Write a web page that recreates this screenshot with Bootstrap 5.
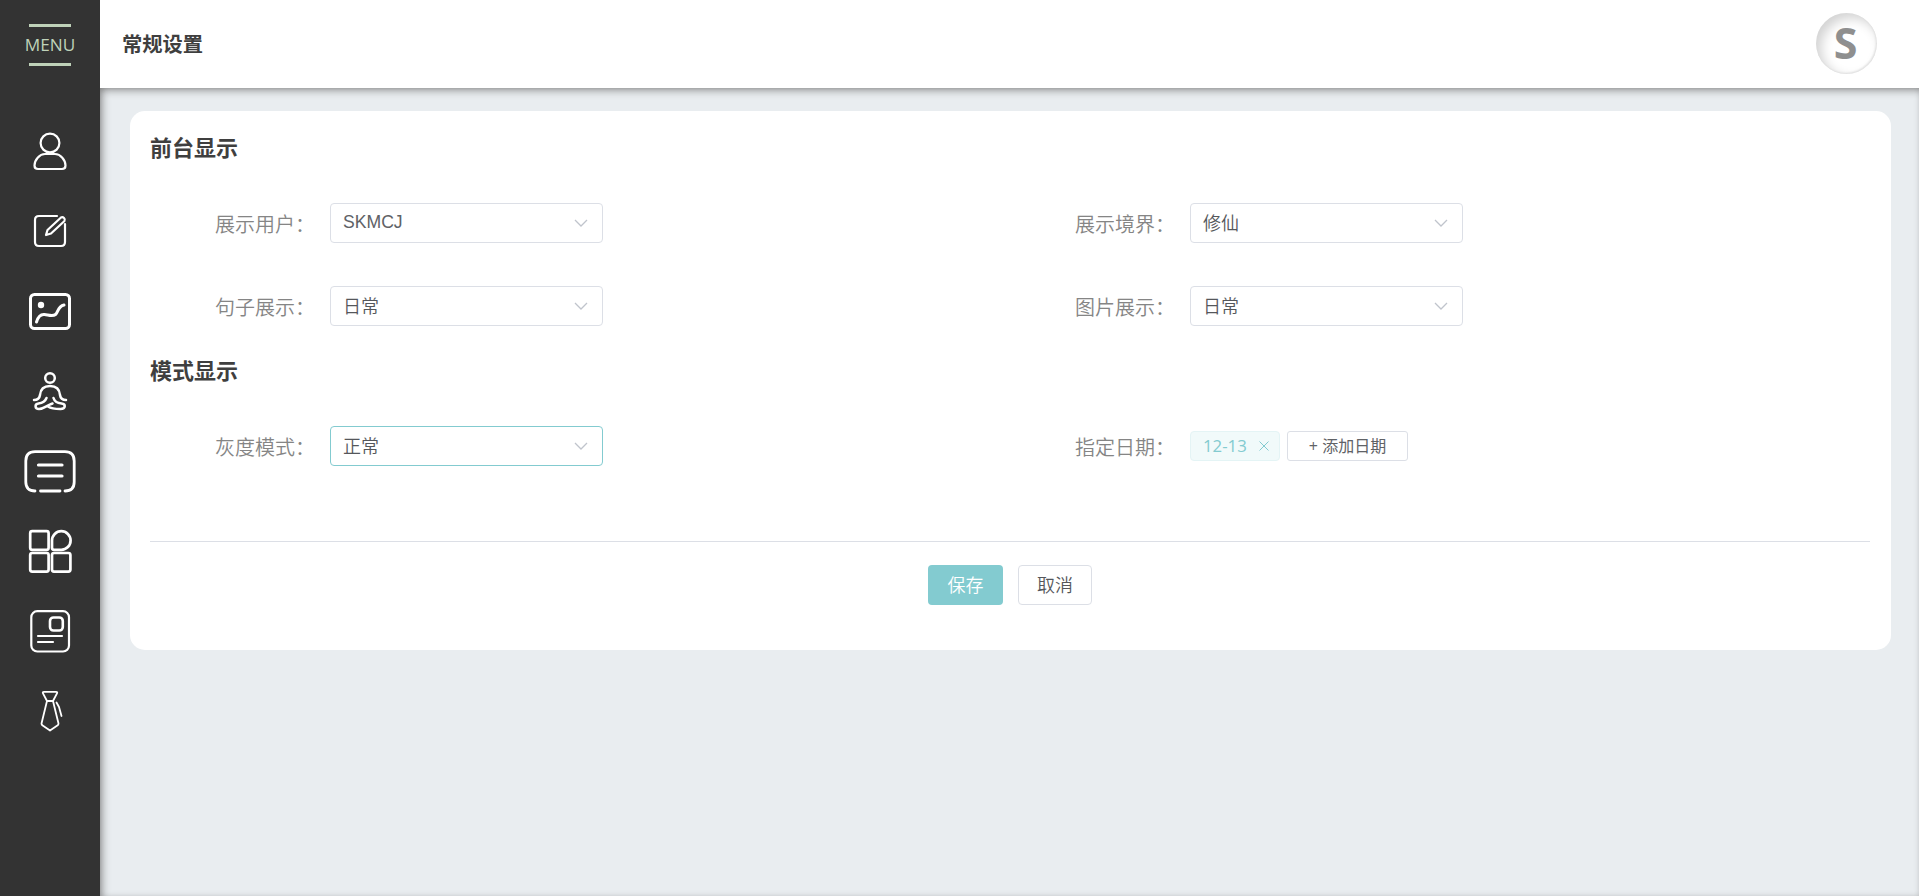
<!DOCTYPE html>
<html lang="zh-CN">

<head>
    <meta charset="UTF-8">
    <meta name="viewport" content="width=device-width, initial-scale=1.0">
    <title>常规设置</title>
    <link href="https://cdn.jsdelivr.net/npm/bootstrap@5.3.0/dist/css/bootstrap.min.css" rel="stylesheet">
    <style>
        body {
            font-family: "Open Sans", "Noto Sans CJK SC", sans-serif;
            color: #3f3f3f;
            overflow: hidden;
        }

        .side-menu {
            width: 100px;
            background: #333;
        }

        .menu-title {
            width: 60px;
            height: 42px;
            margin-top: 24px;
            margin-bottom: 45px;
            color: #bfd2b9;
            font-size: 17.2px;
            line-height: 36px;
        }

        .menu-title::before,
        .menu-title::after {
            content: "";
            display: block;
            width: 42px;
            height: 3px;
            margin: 0 auto;
            background: #bfd2b9;
        }

        .menu-item {
            height: 80px;
        }

        .menu-item svg {
            width: 60px;
            height: 60px;
            fill: none;
            stroke: #fff;
            stroke-width: 2.2;
            stroke-linecap: round;
            stroke-linejoin: round;
        }

        .top-bar {
            height: 88px;
            padding: 2px 42px 2px 22px;
        }

        .top-bar h1 {
            padding-top: 1px;
            font-size: 20.3px;
            font-weight: 700;
        }

        .avatar {
            width: 61px;
            height: 61px;
            margin-top: -2px;
            padding-right: 2px;
            color: #8f8f8f;
            font-size: 43px;
            font-weight: 700;
            box-shadow: inset 5px 5px 12px #d2d2d2, inset -1px -1px 2px #e2e2e2;
        }

        .page-main {
            padding: 23px 28px 0 30px;
            background: #e9edf0;
            box-shadow: inset 3px 3px 10px -2px #777, inset 0 0 5px rgba(0, 0, 0, .04);
        }

        .panel {
            height: 539px;
            padding: 21px 21px 0 20px;
            border-radius: 15px;
        }

        .panel h2 {
            height: 30px;
            margin: 0;
            font-size: 22px;
            font-weight: 700;
            line-height: 30px;
        }

        .field-grid {
            row-gap: 43px;
            padding-top: 41px;
            padding-bottom: 29px;
        }

        .field {
            height: 40px;
        }

        .field-label {
            width: 180px;
            padding: 3px 15px 0 0;
            color: #858585;
            font-size: 20px;
            font-weight: 350;
            text-align: right;
        }

        .picker {
            width: 273px;
            height: 40px;
            padding: 0 14px 0 12px;
            border: 1px solid #dcdfe6;
            border-radius: 4px;
            color: #55575b;
            font-size: 18px;
            font-weight: 350;
        }

        .picker.active {
            border-color: #83cbd0;
        }

        .picker svg {
            width: 14px;
            height: 8px;
            fill: none;
            stroke: #c0c4cc;
            stroke-width: 1.3;
        }

        .latin {
            margin-top: -1px;
            color: #606266;
            font-family: "Liberation Sans", sans-serif;
            font-size: 17.6px;
            font-weight: 400;
        }

        .date-tag {
            width: 90px;
            height: 30px;
            padding: 0 10px 0 12px;
            border: 1px solid #e4f4f5;
            border-radius: 4px;
            background: #f1fafa;
            color: #83cbd0;
            font-size: 16.8px;
        }

        .date-tag span {
            margin-top: -1px;
        }

        .date-tag svg {
            width: 10px;
            height: 10px;
            stroke: #83cbd0;
        }

        .add-date {
            width: 121px;
            height: 30px;
            margin-left: 7px;
            padding: 0;
            border: 1px solid #dcdfe6;
            border-radius: 3px;
            color: #606266;
            font-size: 16px;
            line-height: 28px;
        }

        .divider {
            margin: 75px 0 23px;
            border-top: 1px solid #dcdfe6;
        }

        .form-btn {
            width: 75px;
            height: 40px;
            padding: 0;
            border-radius: 4px;
            font-size: 18px;
            font-weight: 350;
            line-height: 34px;
        }

        .form-btn.save,
        .form-btn.save:hover {
            border: 0;
            background: #83cbd0;
            color: #fff;
            line-height: 36px;
        }

        .form-btn.cancel {
            width: 74px;
            margin-left: 15px;
            border: 1px solid #dcdfe6;
            color: #55575b;
        }
    </style>
</head>

<body class="d-flex vh-100">
    <nav class="side-menu d-flex flex-column align-items-center flex-shrink-0">
        <div class="menu-title text-center">MENU</div>
        <!-- user -->
        <a class="menu-item d-flex align-items-center" href="#">
            <svg viewBox="0 0 60 60"><circle cx="30" cy="22" r="9.400" /><path d="M25 33h10c5.500 0 10.500 6 10.500 11.500 0 2.500-1 3.500-3.500 3.500H18c-2.500 0-3.500-1-3.500-3.500C14.500 39 19.500 33 25 33z" /></svg>
        </a>
        <!-- edit -->
        <a class="menu-item d-flex align-items-center" href="#">
            <svg viewBox="0 0 60 60"><path d="M37 15H19q-4 0-4 4v22q0 4 4 4h22q4 0 4-4V23" /><path d="M41 16.500q1.500-1 3 .5t.5 3L31 32.500l-5 1.500 1.500-5z" /></svg>
        </a>
        <!-- picture -->
        <a class="menu-item d-flex align-items-center" href="#">
            <svg viewBox="0 0 60 60"><g stroke-width="3"><rect x="10.500" y="13.500" width="39" height="34" rx="4" /><circle cx="21" cy="24" r="3.200" fill="#fff" stroke="none" /><path d="M16.500 41c1.500-5 4-8 8-7.500s8 2.500 11 0 2-8 8.500-9.500" /></g></svg>
        </a>
        <!-- meditation -->
        <a class="menu-item d-flex align-items-center" href="#">
            <svg viewBox="0 0 60 60"><g stroke-width="2.500"><circle cx="30" cy="17" r="4.800" /><path d="M14 39c4 0 5.500-1.500 6-5 .5-6 3.500-9 10-9s9.500 3 10 9c.5 3.500 2 5 6 5" /><path d="M26.500 37c-1.500 4-4 5-8 5.500-4 .5-4 5.500.5 5.500 5 0 7.500-3.500 13.500-5.500M28 45.500c3 2 7 2.500 12.500 2.500 5.500 0 5.500-5 1-5.500s-7-2-8-5.500" /></g></svg>
        </a>
        <!-- list -->
        <a class="menu-item d-flex align-items-center" href="#">
            <svg viewBox="0 0 60 60"><g stroke-width="2.800"><path d="M15 50C9 50 5.800 47 5.800 41V20q0-9.300 9.300-9.300h29.800q9.300 0 9.300 9.300v21c0 6-3.200 9-9.200 9M20.500 50h19.500" /><path d="M18.500 24h23.500M18.500 35h23.500" stroke-width="3.200" /></g></svg>
        </a>
        <!-- apps -->
        <a class="menu-item d-flex align-items-center" href="#">
            <svg viewBox="0 0 60 60"><g stroke-width="2.700"><rect x="10.200" y="10.200" width="18.400" height="18.600" rx="2" /><rect x="10.200" y="32" width="18.400" height="18.600" rx="2" /><rect x="32" y="32" width="18.400" height="18.600" rx="2" /><path d="M41.300 10.200a9.300 9.300 0 0 1 0 18.600H34q-2 0-2-2v-7.300a9.300 9.300 0 0 1 9.300-9.300z" /></g></svg>
        </a>
        <!-- news -->
        <a class="menu-item d-flex align-items-center" href="#">
            <svg viewBox="0 0 60 60"><rect x="11.300" y="10.200" width="37.700" height="40.300" rx="6" /><rect x="30" y="16.500" width="12.800" height="13" rx="3.500" stroke-width="2.600" /><path d="M18 35h24M18 41h15" /></svg>
        </a>
        <!-- tie -->
        <a class="menu-item d-flex align-items-center" href="#">
            <svg viewBox="0 0 60 60"><g stroke-width="1.800"><path d="M24 10.800h12q1.800 0 1 1.600L33 20h-6l-4-7.600q-.8-1.600 1-1.600zM27 20l-5.500 22.500q0 1 .8 1.800L30 49.500l7.700-5.200q.8-.8.8-1.800L33 20M36.500 21.500L39 26l2.500 9" /></g></svg>
        </a>
    </nav>

    <div class="d-flex flex-column flex-grow-1">
        <header class="top-bar d-flex align-items-center justify-content-between bg-white">
            <h1 class="mb-0">常规设置</h1>
            <div class="avatar rounded-circle d-flex align-items-center justify-content-center">S</div>
        </header>

        <main class="page-main flex-grow-1">
            <div class="panel bg-white">
                <h2>前台显示</h2>
                <div class="row g-0 field-grid">
                    <div class="col-6 field d-flex align-items-center">
                        <div class="field-label">展示用户：</div>
                        <div class="picker d-flex align-items-center justify-content-between">
                            <span class="latin">SKMCJ</span>
                            <svg viewBox="0 0 14 8"><path d="M1 1l6 6 6-6" /></svg>
                        </div>
                    </div>
                    <div class="col-6 field d-flex align-items-center">
                        <div class="field-label">展示境界：</div>
                        <div class="picker d-flex align-items-center justify-content-between">
                            <span>修仙</span>
                            <svg viewBox="0 0 14 8"><path d="M1 1l6 6 6-6" /></svg>
                        </div>
                    </div>
                    <div class="col-6 field d-flex align-items-center">
                        <div class="field-label">句子展示：</div>
                        <div class="picker d-flex align-items-center justify-content-between">
                            <span>日常</span>
                            <svg viewBox="0 0 14 8"><path d="M1 1l6 6 6-6" /></svg>
                        </div>
                    </div>
                    <div class="col-6 field d-flex align-items-center">
                        <div class="field-label">图片展示：</div>
                        <div class="picker d-flex align-items-center justify-content-between">
                            <span>日常</span>
                            <svg viewBox="0 0 14 8"><path d="M1 1l6 6 6-6" /></svg>
                        </div>
                    </div>
                </div>

                <h2>模式显示</h2>
                <div class="row g-0 field-grid pb-0">
                    <div class="col-6 field d-flex align-items-center">
                        <div class="field-label">灰度模式：</div>
                        <div class="picker active d-flex align-items-center justify-content-between">
                            <span>正常</span>
                            <svg viewBox="0 0 14 8"><path d="M1 1l6 6 6-6" /></svg>
                        </div>
                    </div>
                    <div class="col-6 field d-flex align-items-center">
                        <div class="field-label">指定日期：</div>
                        <div class="date-tag d-flex align-items-center justify-content-between">
                            <span>12-13</span>
                            <svg viewBox="0 0 10 10"><path d="M.5.5l9 9M9.500.5l-9 9" /></svg>
                        </div>
                        <button class="btn add-date">+ 添加日期</button>
                    </div>
                </div>

                <div class="divider"></div>
                <div class="d-flex justify-content-center">
                    <button class="btn form-btn save">保存</button>
                    <button class="btn form-btn cancel">取消</button>
                </div>
            </div>
        </main>
    </div>

    <script src="https://cdn.jsdelivr.net/npm/bootstrap@5.3.0/dist/js/bootstrap.bundle.min.js"></script>
</body>

</html>
